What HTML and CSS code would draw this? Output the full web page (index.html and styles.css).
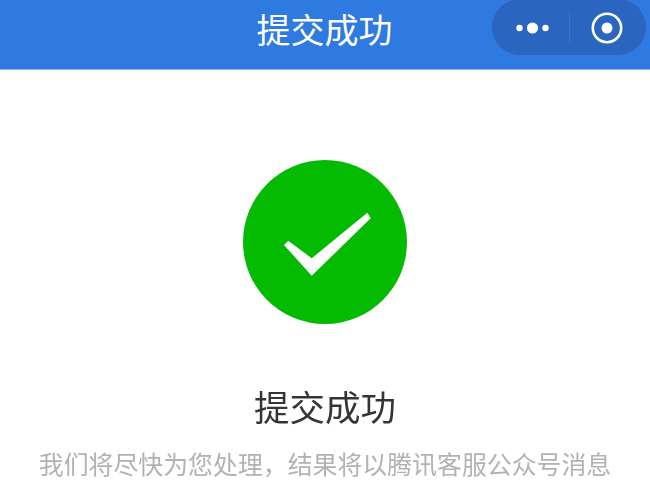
FILE: index.html
```html
<!DOCTYPE html>
<html lang="zh-CN">
<head>
<meta charset="utf-8">
<title>提交成功</title>
<link rel="stylesheet" href="styles.css">
</head>
<body>
<header class="nav">
  <h1 class="nav-title">提交成功</h1>
  <div class="capsule">
    <svg class="capsule-more" viewBox="0 0 34 12" aria-hidden="true">
      <circle cx="3.5" cy="6" r="3.2"/><circle cx="16.5" cy="6" r="5.6"/><circle cx="29.5" cy="6" r="3.2"/>
    </svg>
    <span class="capsule-line"></span>
    <svg class="capsule-close" viewBox="0 0 32 32" aria-hidden="true">
      <circle class="ring" cx="16" cy="16" r="14.2"/><circle cx="16" cy="16" r="5.5"/>
    </svg>
  </div>
</header>
<main class="result">
  <svg class="result-icon" viewBox="0 0 164 164" aria-hidden="true">
    <circle class="disc" cx="82" cy="82" r="82"/>
    <polygon class="tick" points="41,85 45.3,80.7 68.7,98.3 124.3,52.7 127.7,58.3 68.7,115.7"/>
  </svg>
  <h2 class="result-title">提交成功</h2>
  <p class="result-desc">我们将尽快为您处理，结果将以腾讯客服公众号消息</p>
</main>
</body>
</html>
```
FILE: styles.css
```css
* { box-sizing: border-box; }
html, body { margin: 0; height: 100%; }
body {
  width: 650px;
  height: 481px;
  overflow: hidden;
  background: #fff;
  font-family: "Noto Sans CJK SC", "Liberation Sans", sans-serif;
  filter: blur(0.5px);
}
.nav {
  position: relative;
  height: 70px;
  background: #2f7ae0;
  border-bottom: 1px solid #8fb8f0;
  display: flex;
  align-items: center;
  justify-content: center;
  padding-bottom: 11px;
  padding-right: 1px;
}
.nav-title {
  margin: 0;
  font-size: 34px;
  line-height: 44px;
  font-weight: 400;
  color: #fff;
}
.capsule {
  position: absolute;
  top: -1px;
  left: 492px;
  width: 154px;
  height: 56px;
  border-radius: 28px;
  background: #2a66bf;
  display: flex;
  align-items: center;
  padding-left: 24px;
}
.capsule-more { width: 34px; height: 12px; margin-top: 2px; fill: #fff; }
.capsule-line {
  width: 1px;
  height: 32px;
  margin-left: 19px;
  background: #3b75c8;
}
.capsule-close { width: 32px; height: 32px; margin-left: 21px; margin-top: 2px; fill: #fff; }
.capsule-close .ring { fill: none; stroke: #fff; stroke-width: 2.6; }
.result {
  display: flex;
  flex-direction: column;
  align-items: center;
  padding-top: 90px;
}
.result-icon { width: 164px; height: 164px; display: block; }
.disc { fill: #04bb02; }
.tick { fill: #fff; }
.result-title {
  margin: 56px 0 0;
  font-size: 35.5px;
  line-height: 52px;
  font-weight: 400;
  color: #353535;
}
.result-desc {
  margin: 13px 0 0;
  font-size: 24.9px;
  line-height: 36px;
  color: #b2b2b2;
  white-space: nowrap;
}
```
